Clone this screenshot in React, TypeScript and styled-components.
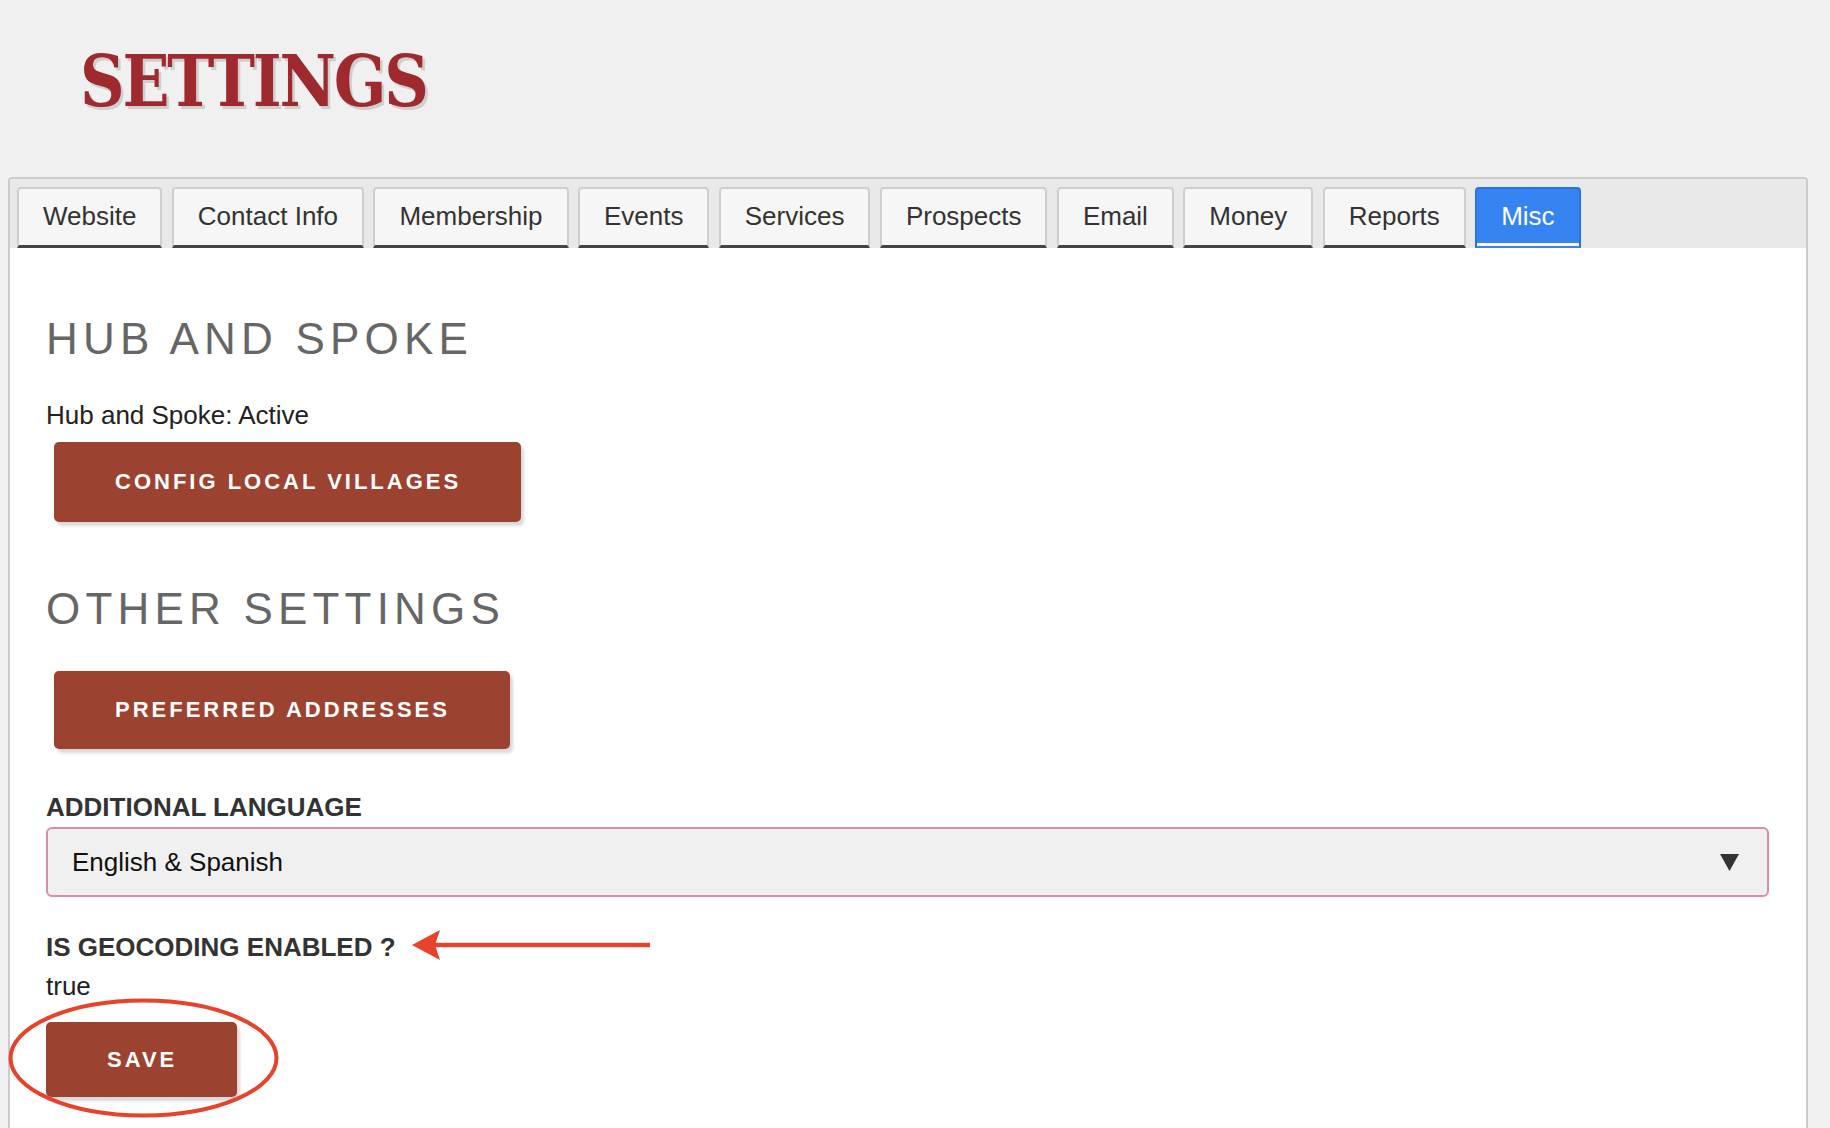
import styled, { createGlobalStyle, css } from 'styled-components';

const GlobalStyle = createGlobalStyle`
  html, body {
    margin: 0;
    padding: 0;
    background: #f0f0f0;
  }
  body {
    font-family: "Liberation Sans", Arial, Helvetica, sans-serif;
    color: #222;
  }
  * {
    box-sizing: border-box;
  }
`;

const tabs = [
  'Website',
  'Contact Info',
  'Membership',
  'Events',
  'Services',
  'Prospects',
  'Email',
  'Money',
  'Reports',
  'Misc',
];

const App = (): JSX.Element => {
  return (
    <>
      <GlobalStyle />
      <Header>
        <Title>SETTINGS</Title>
      </Header>

      <Panel>
        <TabBar>
          {tabs.map((tab) => (
            <Tab key={tab} $active={tab === 'Misc'}>
              {tab}
            </Tab>
          ))}
        </TabBar>

        <Content>
          <SectionHeading $mt={0}>HUB AND SPOKE</SectionHeading>
          <BodyText $mt={35}>Hub and Spoke: Active</BodyText>
          <ActionButton $mt={12} $ml={8} $h={80}>
            CONFIG LOCAL VILLAGES
          </ActionButton>

          <SectionHeading $mt={61}>OTHER SETTINGS</SectionHeading>
          <ActionButton $mt={36} $ml={8} $h={78}>
            PREFERRED ADDRESSES
          </ActionButton>

          <FieldLabel $mt={43}>ADDITIONAL LANGUAGE</FieldLabel>
          <SelectBox>
            <span>English &amp; Spanish</span>
            <svg width="19" height="17" viewBox="0 0 19 17">
              <polygon points="0,0 19,0 9.5,17" fill="#333" />
            </svg>
          </SelectBox>

          <LabelRow>
            <FieldLabel $mt={0}>IS GEOCODING ENABLED ?</FieldLabel>
            <svg width="240" height="30" viewBox="0 0 240 30" overflow="visible">
              <polygon points="0,13 28,-2 23,13 28,28" fill="#e5432b" />
              <rect x="22" y="10.8" width="216" height="4.4" fill="#e5432b" />
            </svg>
          </LabelRow>
          <BodyText $mt={9}>true</BodyText>

          <SaveWrap>
            <ActionButton $mt={0} $h={75}>
              SAVE
            </ActionButton>
            <Ring width="271" height="120" viewBox="0 0 271 120">
              <ellipse cx="135.5" cy="60" rx="133" ry="57.5" fill="none" stroke="#e5432b" strokeWidth="4" />
            </Ring>
          </SaveWrap>
        </Content>
      </Panel>
    </>
  );
};

const Header = styled.header`
  height: 177px;
  padding: 46px 0 0 80px;
`;
const Title = styled.h1`
  display: inline-block;
  margin: 0;
  font-family: "DejaVu Serif", "Liberation Serif", serif;
  font-weight: bold;
  font-size: 71px;
  line-height: 1;
  letter-spacing: -2.5px;
  color: #9e2a2f;
  text-shadow: 3px 3px 0 #cfcfcf;
  transform: scaleX(0.87);
  transform-origin: left center;
`;
const Panel = styled.main`
  width: 1800px;
  min-height: calc(100vh - 177px);
  margin-left: 8px;
  background: #fff;
  border: 2px solid #ccc;
  border-bottom: none;
  border-radius: 4px 4px 0 0;
`;
const TabBar = styled.nav`
  display: flex;
  gap: 9.4px;
  padding: 8px 0 0 7px;
  background: #e9e9e9;
  border-radius: 2px 2px 0 0;
`;
const Tab = styled.button<{ $active?: boolean }>`
  height: 61px;
  padding: 0 24px 2px;
  border: 2px solid #cfcfcf;
  border-bottom: 3px solid #444;
  border-radius: 4px 4px 0 0;
  background: #f6f6f6;
  color: #333;
  font: 26px "Liberation Sans", Arial, Helvetica, sans-serif;
  cursor: pointer;

  ${({ $active }) =>
    $active &&
    css`
      background: #3584f1;
      border-color: #2a73de;
      border-bottom: 2px solid #3584f1;
      box-shadow: inset 0 -3px 0 #fff;
      color: #fff;
    `}
`;
const Content = styled.section`
  display: flex;
  flex-direction: column;
  align-items: flex-start;
  padding: 65px 37px 40px 36px;
`;
const SectionHeading = styled.h2<{ $mt: number }>`
  margin: ${({ $mt }) => $mt}px 0 0;
  font-size: 44px;
  font-weight: normal;
  line-height: 52px;
  letter-spacing: 5.2px;
  color: #666;
`;
const BodyText = styled.div<{ $mt: number }>`
  margin-top: ${({ $mt }) => $mt}px;
  font-size: 26px;
  line-height: 30px;
  color: #222;
`;
const FieldLabel = styled.div<{ $mt: number }>`
  margin-top: ${({ $mt }) => $mt}px;
  font-size: 26px;
  font-weight: bold;
  line-height: 30px;
  color: #333;
`;
const ActionButton = styled.button<{ $mt: number; $ml?: number; $h: number }>`
  height: ${({ $h }) => $h}px;
  margin: ${({ $mt, $ml }) => `${$mt}px 0 0 ${$ml ?? 0}px`};
  padding: 0 60px 0 61px;
  background: #9c4231;
  color: #fff;
  border: none;
  border-radius: 5px;
  font: bold 22px "Liberation Sans", Arial, Helvetica, sans-serif;
  letter-spacing: 3px;
  box-shadow: 3px 4px 3px rgba(0, 0, 0, 0.15);
  cursor: pointer;
`;
const SelectBox = styled.div`
  align-self: stretch;
  display: flex;
  align-items: center;
  justify-content: space-between;
  height: 70px;
  margin-top: 5px;
  padding: 0 28px 0 24px;
  background: #f0f0f0;
  border: 2px solid #d98cab;
  border-radius: 6px;
  font-size: 26px;
  color: #111;
`;
const LabelRow = styled.div`
  display: flex;
  align-items: center;
  gap: 16px;
  margin-top: 35px;
`;
const SaveWrap = styled.div`
  position: relative;
  margin-top: 21px;
`;
const Ring = styled.svg`
  position: absolute;
  left: -38px;
  top: -24px;
  overflow: visible;
  pointer-events: none;
`;

export default App;
